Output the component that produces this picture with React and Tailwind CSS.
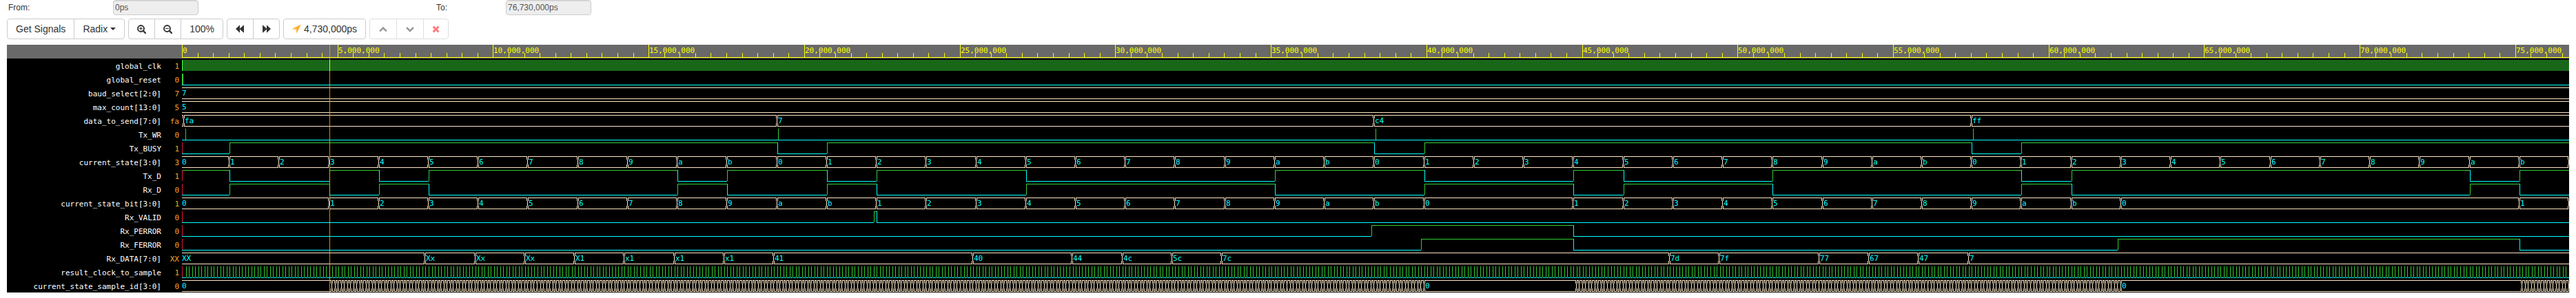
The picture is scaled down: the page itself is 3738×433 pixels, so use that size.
import { useLayoutEffect, useRef, useState } from "react";

const END = 76.73; // microsecond-scale time units (1 = 1,000,000ps)
const CURSOR = 4.73;
const ROW = 20;
const HEX = "0123456789ab";

const GREEN = "#32cd32";
const CYAN = "#00ffff";
const BISQUE = "#ffe4c4";
const CRIMSON = "#dc143c";

const steps = (from, labels, step = 1.6) => labels.map((l, i) => [from + i * step, l]);
const chars = (s) => s.split("");

const stateCycle = Array.from({ length: 47 }, (_, i) => [1.53 + i * 1.6, HEX[(i + 1) % 12]]);
const sampleTicks = (from, to) => {
  const out = [];
  for (let t = from; t < to - 0.01; t += 0.1) out.push([t, ""]);
  return out;
};

const dataEdges = [1.53, 4.73, 6.33, 7.93, 15.93, 17.53, 20.73, 22.33, 27.13, 35.13, 39.93, 44.73, 46.33, 51.13, 59.13, 60.73, 73.53, 75.13];

const SIGNALS = [
  { name: "global_clk", value: "1", kind: "clock" },
  { name: "global_reset", value: "0", kind: "pulse", at: [0, 0.03] },
  { name: "baud_select[2:0]", value: "7", kind: "bus", first: "7", changes: [] },
  { name: "max_count[13:0]", value: "5", kind: "bus", first: "5", changes: [] },
  { name: "data_to_send[7:0]", value: "fa", kind: "bus", first: "", changes: [[0.07, "fa"], [19.13, "7"], [38.33, "c4"], [57.53, "ff"]] },
  { name: "Tx_WR", value: "0", kind: "pulse", at: [0.11, 19.17, 38.37, 57.57] },
  { name: "Tx_BUSY", value: "1", kind: "bit", first: 0, edges: [1.53, 19.13, 20.73, 38.33, 39.93, 57.53, 59.13] },
  { name: "current_state[3:0]", value: "3", kind: "bus", first: "0", changes: [...stateCycle, [END, ""]] },
  { name: "Tx_D", value: "1", kind: "bit", first: 1, edges: dataEdges },
  { name: "Rx_D", value: "0", kind: "bit", first: 0, edges: dataEdges },
  {
    name: "current_state_bit[3:0]", value: "1", kind: "bus", first: "0",
    changes: [
      ...steps(4.73, chars("123456789ab")),
      ...steps(22.33, chars("123456789ab0")),
      ...steps(44.73, chars("123456789ab0")),
      [75.13, "1"],
      [END, ""],
    ],
  },
  { name: "Rx_VALID", value: "0", kind: "bit", first: 0, edges: [22.24, 22.33] },
  { name: "Rx_PERROR", value: "0", kind: "bit", first: 0, edges: [38.23, 44.73] },
  { name: "Rx_FERROR", value: "0", kind: "bit", first: 0, edges: [39.83, 44.73, 62.23, 75.13] },
  {
    name: "Rx_DATA[7:0]", value: "XX", kind: "bus", first: "XX",
    changes: [
      ...steps(7.829, ["Xx", "Xx", "Xx", "X1", "x1", "x1", "x1", "41"]),
      [25.429, "40"],
      ...steps(28.629, ["44", "4c", "5c", "7c"]),
      ...steps(47.829, ["7d", "7f"]),
      ...steps(52.629, ["77", "67", "47", "7"]),
    ],
  },
  { name: "result_clock_to_sample", value: "1", kind: "sample" },
  {
    name: "current_state_sample_id[3:0]", value: "0", kind: "bus", first: "0",
    changes: [
      ...sampleTicks(4.83, 39.93), [39.93, "0"],
      ...sampleTicks(44.83, 62.33), [62.33, "0"],
      ...sampleTicks(75.23, END), [END, ""],
    ],
  },
];

const box = (x, y, w, h) => (w > 0 ? `M${x} ${y}h${w}v${h}h${-w}z` : "");

function Trace({ signal, top, width }) {
  const px = (t) => Math.round((t * width) / END);
  const hi = top + 2;
  const lo = top + 18;
  let green = "";
  let cyan = "";
  let bisque = "";
  let red = "";
  const texts = [];

  if (signal.kind === "clock") {
    green += box(0, hi, 2, 16);
    for (let x = 3; x < width; x += 2) green += box(x, hi, 1, 16);
  } else if (signal.kind === "pulse") {
    cyan += box(0, lo, width, 1);
    signal.at.forEach((t) => (green += box(px(t), hi, 1, 16)));
  } else if (signal.kind === "sample") {
    red += box(0, hi, 1, 16);
    let x0 = 0;
    for (let t = 0.13; t < END - 0.05; t += 0.1) {
      const x = px(t);
      green += box(x, hi, 1, 16);
      cyan += box(x0, lo, x - x0, 1);
      x0 = x + 1;
    }
    cyan += box(x0, lo, width - x0, 1);
  } else if (signal.kind === "bit") {
    let level = signal.first;
    let x0 = 0;
    [...signal.edges, END].forEach((t, i) => {
      const x = px(t);
      if (i > 0) {
        if (level) green += box(x0, hi, 1, 16);
        else cyan += box(x0, hi, 1, 17);
      }
      if (level) green += box(x0, hi, x - x0, 1);
      else cyan += box(x0, lo, x - x0, 1);
      level = 1 - level;
      x0 = x;
    });
    red += box(0, hi, 1, 16);
  } else {
    let x0 = 0;
    let label = signal.first;
    signal.changes.forEach(([t, next]) => {
      const x = px(t);
      bisque += box(x0, hi, x - 1 - x0, 1) + box(x0, lo, x - 1 - x0, 1);
      bisque += box(x - 2, hi, 1, 5) + box(x - 2, lo - 4, 1, 5);
      bisque += box(x - 1, hi + 5, 1, 7);
      bisque += box(x, hi, 1, 5) + box(x, lo - 4, 1, 5);
      if (label) texts.push([x0, label]);
      x0 = x;
      label = next;
    });
    bisque += box(x0, hi, width - x0, 1) + box(x0, lo, width - x0, 1);
    if (label) texts.push([x0, label]);
  }

  return (
    <g>
      <path d={green} fill={GREEN} />
      <path d={cyan} fill={CYAN} />
      <path d={bisque} fill={BISQUE} />
      <path d={red} fill={CRIMSON} />
      {texts.map(([x, s]) => (
        <text key={x} x={x + (x ? 1 : 0)} y={top + 14} fill={CYAN}>{s}</text>
      ))}
    </g>
  );
}

function Ruler({ width }) {
  const px = (t) => Math.round((t * width) / END);
  let lines = box(0, 18, width, 1);
  const texts = [];
  for (let i = 0; i / 2 < END; i++) {
    const major = i % 10 === 0;
    lines += major ? box(px(i / 2), 0, 1, 18) : box(px(i / 2), 12, 1, 6);
    if (major) texts.push([px(i / 2), (i * 500000).toLocaleString("en-US")]);
  }
  return (
    <g fill="#ffff00">
      <rect width={width} height="20" fill="#696969" />
      <path d={lines} />
      {texts.map(([x, s]) => (
        <text key={x} x={x + 1} y="12">{s}</text>
      ))}
    </g>
  );
}

function Waves() {
  const ref = useRef(null);
  const [width, setWidth] = useState(0);
  useLayoutEffect(() => {
    const measure = () => setWidth(Math.floor(ref.current.clientWidth));
    measure();
    const observer = new ResizeObserver(measure);
    observer.observe(ref.current);
    return () => observer.disconnect();
  }, []);
  const height = ROW * (SIGNALS.length + 1);
  return (
    <div ref={ref} className="min-w-0 flex-1 overflow-hidden">
      {width > 0 && (
        <svg
          width={width}
          height={height}
          shapeRendering="crispEdges"
          role="img"
          aria-label="Waveforms"
          className="block font-['DejaVu_Sans_Mono',monospace] text-[11px]"
        >
          <Ruler width={width} />
          {SIGNALS.map((s, i) => (
            <Trace key={s.name} signal={s} top={ROW * (i + 1)} width={width} />
          ))}
          <rect x={Math.round((CURSOR * width) / END)} width="1" height={height} fill="#ffa500" opacity="0.85" />
        </svg>
      )}
    </div>
  );
}

function Icon({ children, className = "w-[13px]", box: viewBox = "0 0 13 14" }) {
  return (
    <svg viewBox={viewBox} className={`h-3.5 ${className}`} fill="currentColor" aria-hidden="true">
      {children}
    </svg>
  );
}

const Magnifier = ({ plus }) => (
  <Icon>
    <circle cx="5.5" cy="6.5" r="4.5" fill="none" stroke="currentColor" strokeWidth="1.9" />
    <path d="M8.6 9.6L12 13" stroke="currentColor" strokeWidth="2.3" strokeLinecap="round" />
    <path d={plus ? "M3 6h2V4h1v2h2v1H6v2H5V7H3z" : "M3 6h5v1H3z"} />
  </Icon>
);

function Group({ children, faded = false }) {
  return (
    <div
      className={`flex h-[30px] divide-x overflow-hidden rounded border bg-white ${
        faded ? "divide-[#dedede] border-[#dedede]" : "divide-[#cccccc] border-[#cccccc]"
      }`}
    >
      {children}
    </div>
  );
}

function Button({ children, ...rest }) {
  return (
    <button type="button" className="flex items-center gap-1 px-3 text-sm leading-5 text-[#333333]" {...rest}>
      {children}
    </button>
  );
}

function Field({ id, label, value, labelClass }) {
  return (
    <div className="flex w-1/6 items-center">
      <label htmlFor={id} className={`shrink-0 text-[#333333] ${labelClass}`}>{label}</label>
      <input
        id={id}
        readOnly
        value={value}
        className="h-[22px] w-[124px] rounded border border-[#cccccc] bg-[#eeeeee] px-0.5 text-[#555555] shadow-[inset_0_1px_1px_rgba(0,0,0,0.08)]"
      />
    </div>
  );
}

export default function App() {
  return (
    <main className="bg-white pb-2 font-['Liberation_Sans',Arial,sans-serif]">
      <div className="flex pl-3 text-xs">
        <Field id="from" label="From:" value="0ps" labelClass="w-[152px]" />
        <Field id="to" label="To:" value="76,730,000ps" labelClass="w-[101px]" />
      </div>

      <div className="mt-[5px] flex gap-[5px] pl-2.5">
        <Group>
          <Button>Get Signals</Button>
          <Button>
            Radix
            <svg viewBox="0 0 8 4" className="h-1 w-2" fill="currentColor" aria-hidden="true"><path d="M0 0h8L4 4z" /></svg>
          </Button>
        </Group>
        <Group>
          <Button aria-label="Zoom in"><Magnifier plus /></Button>
          <Button aria-label="Zoom out"><Magnifier /></Button>
          <Button>100%</Button>
        </Group>
        <Group>
          <Button aria-label="Back">
            <Icon><path d="M0 7L6 1.2V6.6L12 1.2V12.8L6 7.4V12.8z" /></Icon>
          </Button>
          <Button aria-label="Forward">
            <Icon><path d="M13 7L7 1.2V6.6L1 1.2V12.8L7 7.4V12.8z" /></Icon>
          </Button>
        </Group>
        <Group>
          <Button>
            <span className="text-[#ffb02e]">
              <Icon><path d="M12.4 1.3L7 12.6Q6.3 13.2 6.1 12.4V7.4H1.1Q0.2 7 0.9 6.5L11.9 1Q12.5 0.8 12.4 1.3z" /></Icon>
            </span>
            4,730,000ps
          </Button>
        </Group>
        <Group faded>
          <Button aria-label="Previous" disabled>
            <span className="text-[#999999]">
              <Icon className="w-3.5" box="0 0 14 14"><path d="M2.1 10.4L7 5.5L11.9 10.4" fill="none" stroke="currentColor" strokeWidth="2.5" /></Icon>
            </span>
          </Button>
          <Button aria-label="Next" disabled>
            <span className="text-[#999999]">
              <Icon className="w-3.5" box="0 0 14 14"><path d="M2.1 5L7 9.9L11.9 5" fill="none" stroke="currentColor" strokeWidth="2.5" /></Icon>
            </span>
          </Button>
          <Button aria-label="Remove" disabled>
            <span className="text-[#ff7f7f]">
              <Icon className="w-[11px]" box="0 0 11 14">
                <path d="M1.6 3.6L9.4 11.4M9.4 3.6L1.6 11.4" stroke="currentColor" strokeWidth="3" />
              </Icon>
            </span>
          </Button>
        </Group>
      </div>

      <section className="mx-2.5 mt-2 flex bg-black">
        <ul className="w-[254px] shrink-0 font-['DejaVu_Sans_Mono',monospace] text-[11px] leading-5 text-white">
          <li className="h-5 bg-[#696969]" aria-hidden="true" />
          {SIGNALS.map((s) => (
            <li key={s.name} className="flex h-5 justify-end pt-0.5 pr-1">
              <span>{s.name}</span>
              <span className="w-[26px] text-right text-[#f5a623]">{s.value}</span>
            </li>
          ))}
        </ul>
        <Waves />
      </section>
    </main>
  );
}
